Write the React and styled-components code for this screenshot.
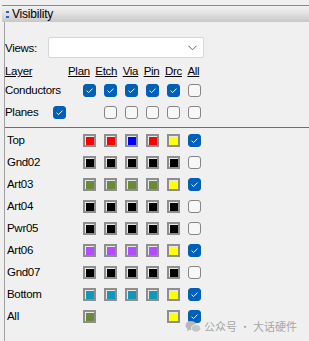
import React from "react";
import styled, { createGlobalStyle } from "styled-components";

const GlobalStyle = createGlobalStyle`
	html, body {
		margin: 0;
		padding: 0;
		background: #f0f0f0;
	}
	body {
		font-family: "Liberation Sans", Arial, sans-serif;
		font-size: 11.5px;
		letter-spacing: -0.3px;
		color: #000;
	}
`;

const COLORS = {
	r: "#ff0000",
	b: "#0000ff",
	k: "#000000",
	g: "#6a8a3a",
	p: "#b24cff",
	t: "#1297b8",
	y: "#ffff00",
};

const layers = [
	{ name: "Top", sw: ["r", "r", "b", "r", "y"], on: true },
	{ name: "Gnd02", sw: ["k", "k", "k", "k", "k"], on: false },
	{ name: "Art03", sw: ["g", "g", "g", "g", "y"], on: true },
	{ name: "Art04", sw: ["k", "k", "k", "k", "k"], on: false },
	{ name: "Pwr05", sw: ["k", "k", "k", "k", "k"], on: false },
	{ name: "Art06", sw: ["p", "p", "p", "p", "y"], on: true },
	{ name: "Gnd07", sw: ["k", "k", "k", "k", "k"], on: false },
	{ name: "Bottom", sw: ["t", "t", "t", "t", "y"], on: true },
	{ name: "All", sw: ["g", null, null, null, "y"], on: true },
];

const Check = ({ checked }) => (
	<CheckBox $checked={checked}>
		{checked && (
			<svg width="13" height="13" viewBox="0 0 13 13">
				<path d="M3.6 6.7 L5.6 8.6 L9.5 4.6" fill="none" stroke="#fff" strokeWidth="1" />
			</svg>
		)}
	</CheckBox>
);

const App = () => {
	return (
		<Panel>
			<GlobalStyle />
			<TitleBar>
				<Grip>
					<i />
					<i />
				</Grip>
				<Title>Visibility</Title>
			</TitleBar>
			<Body>
				<ViewsRow>
					<ViewsLabel>Views:</ViewsLabel>
					<Select>
						<svg width="9" height="6" viewBox="0 0 9 6">
							<path d="M0.5 0.8 L4.5 4.8 L8.5 0.8" fill="none" stroke="#606060" strokeWidth="1" />
						</svg>
					</Select>
				</ViewsRow>
				<HeaderRow>
					<LayerHead>Layer</LayerHead>
					<HeadLabel>Plan</HeadLabel>
					<HeadLabel>Etch</HeadLabel>
					<HeadLabel>Via</HeadLabel>
					<HeadLabel>Pin</HeadLabel>
					<HeadLabel>Drc</HeadLabel>
					<HeadLabel>All</HeadLabel>
				</HeaderRow>
				<Row>
					<Label>Conductors</Label>
					<Check checked />
					<Check checked />
					<Check checked />
					<Check checked />
					<Check checked />
					<Check />
				</Row>
				<Row>
					<Label>
						<PlanesText>Planes</PlanesText>
						<Check checked />
					</Label>
					<span />
					<Check />
					<Check />
					<Check />
					<Check />
					<Check />
				</Row>
				<LayerBox>
					{layers.map((l) => (
						<Row key={l.name}>
							<LayerName>{l.name}</LayerName>
							{l.sw.map((c, i) =>
								c ? <Swatch key={i} $color={COLORS[c]} /> : <span key={i} />
							)}
							<Check checked={l.on} />
						</Row>
					))}
				</LayerBox>
			</Body>
			<Watermark>
				<svg width="16" height="13" viewBox="0 0 16 13">
					<ellipse cx="6" cy="5.5" rx="5.5" ry="4.6" fill="#b8b8b8" />
					<path d="M2.5 9 L2 11.5 L5 9.8 Z" fill="#b8b8b8" />
					<ellipse cx="11" cy="8.3" rx="4.6" ry="3.8" fill="#c6c6c6" stroke="#f0f0f0" strokeWidth="0.8" />
				</svg>
				<span>公众号 · 大话硬件</span>
			</Watermark>
		</Panel>
	);
};

export default App;

const Panel = styled.div`
	position: relative;
	width: 309px;
	height: 341px;
	display: flex;
	flex-direction: column;
	overflow: hidden;
	background: #f0f0f0;
`;

const TitleBar = styled.div`
	margin-top: 5px;
	margin-left: 2px;
	height: 16px;
	border-top: 1px solid #8a8a8a;
	background: linear-gradient(#f2f2f2, #e2e2e2 45%, #c8c8c8);
	display: flex;
	align-items: center;
	padding-left: 4px;
	gap: 3px;
`;

const Grip = styled.div`
	display: flex;
	flex-direction: column;
	gap: 3px;
	i {
		display: block;
		width: 3px;
		height: 2px;
		background: #2a62c8;
	}
`;

const Title = styled.div`
	font-size: 12px;
	letter-spacing: -0.2px;
`;

const Body = styled.div`
	flex: 1;
	margin-left: 4px;
	border-left: 1px solid #a0a0a0;
	display: flex;
	flex-direction: column;
`;

const ViewsRow = styled.div`
	margin-top: 15px;
	height: 21px;
	display: flex;
	align-items: center;
`;

const ViewsLabel = styled.div`
	width: 43px;
`;

const Select = styled.div`
	box-sizing: border-box;
	width: 156px;
	height: 21px;
	background: #fff;
	border: 1px solid #d6d6d6;
	border-radius: 2px;
	display: flex;
	align-items: center;
	justify-content: flex-end;
	padding-right: 6px;
`;

const HeaderRow = styled.div`
	margin-top: 5px;
	height: 16px;
	display: flex;
	align-items: center;
	gap: 5.5px;
	text-decoration: underline;
`;

const LayerHead = styled.div`
	width: 57.5px;
`;

const HeadLabel = styled.div``;

const Row = styled.div`
	height: 22px;
	display: grid;
	grid-template-columns: 70px repeat(6, 13px);
	column-gap: 8px;
	align-items: center;
`;

const Label = styled.div`
	display: flex;
	align-items: center;
`;

const PlanesText = styled.span`
	width: 48px;
`;

const LayerBox = styled.div`
	margin-top: 4px;
	border-top: 1px solid #6e6e6e;
	padding-top: 1px;
	flex: 1;
`;

const LayerName = styled.div`
	padding-left: 2px;
`;

const CheckBox = styled.span`
	box-sizing: border-box;
	width: 13px;
	height: 13px;
	border-radius: 3px;
	display: flex;
	align-items: center;
	justify-content: center;
	background: ${(p) => (p.$checked ? "#005fb8" : "#f7f7f7")};
	border: 1px solid ${(p) => (p.$checked ? "#005fb8" : "#858585")};
	svg {
		flex: none;
	}
`;

const Swatch = styled.span`
	box-sizing: border-box;
	width: 13px;
	height: 13px;
	border: 2px solid #8e8e8e;
	background: ${(p) => p.$color};
	box-shadow: inset 1px 1px 0 #e8e8e8;
`;

const Watermark = styled.div`
	position: absolute;
	right: 12px;
	top: 318px;
	display: flex;
	align-items: center;
	gap: 3px;
	font-family: "Noto Sans CJK SC", sans-serif;
	font-size: 11px;
	letter-spacing: 0;
	color: rgba(150, 150, 150, 0.85);
`;
